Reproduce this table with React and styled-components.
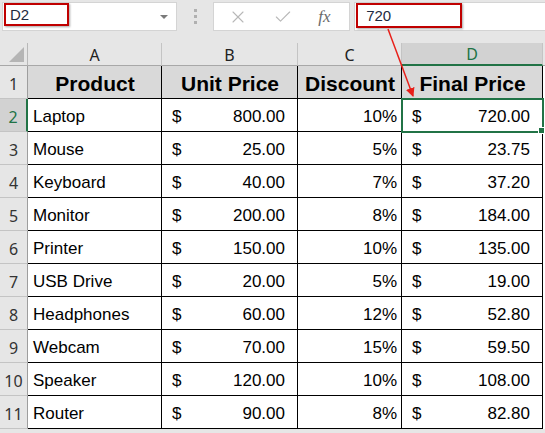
import React from "react";
import styled, { createGlobalStyle } from "styled-components";
import { X, Check } from "lucide-react";

const GlobalStyle = createGlobalStyle`
  body {
    margin: 0;
    background: #e6e6e6;
    font-family: "Liberation Sans", Arial, sans-serif;
  }
`;

const Page = styled.div`
  position: relative;
  width: 545px;
  height: 433px;
  overflow: hidden;
  background: #e6e6e6;
`;

const FormulaBar = styled.div`
  display: flex;
  align-items: stretch;
  height: 29px;
  padding: 2px 0 0 2px;
  margin-bottom: 12px;
`;

const NameBox = styled.div`
  display: flex;
  align-items: flex-start;
  justify-content: space-between;
  width: 175px;
  box-sizing: border-box;
  background: #fff;
  border: 1px solid #d4d4d4;
  padding: 0 8px 0 0;
`;

const Boxed = styled.div`
  display: flex;
  align-items: center;
  box-sizing: border-box;
  width: ${({ $w }) => $w}px;
  height: ${({ $h }) => $h}px;
  margin-left: 1px;
  padding-left: 4px;
  border: 2px solid #c00000;
  box-shadow: 1px 1px 2px rgba(0, 0, 0, 0.35);
  font-size: 15px;
  color: #1e2a40;
`;

const Caret = styled.span`
  align-self: center;
  width: 0;
  height: 0;
  border-left: 4px solid transparent;
  border-right: 4px solid transparent;
  border-top: 4px solid #7a7a7a;
`;

const Grip = styled.div`
  display: flex;
  flex-direction: column;
  justify-content: center;
  gap: 3px;
  width: 36px;
  align-items: center;
  span {
    width: 3px;
    height: 3px;
    background: #b0b0b0;
  }
`;

const ButtonBox = styled.div`
  display: flex;
  align-items: center;
  justify-content: space-around;
  width: 137px;
  box-sizing: border-box;
  background: #fff;
  border: 1px solid #d4d4d4;
  padding: 0 6px 0 2px;
`;

const Fx = styled.span`
  font-family: "Liberation Serif", "Times New Roman", serif;
  font-style: italic;
  font-size: 17px;
  color: #6a6a6a;
`;

const FormulaInput = styled.div`
  flex: 1;
  margin-left: 4px;
  background: #fff;
  border: 1px solid #d4d4d4;
  border-right: none;
`;

const Sheet = styled.div`
  display: grid;
  grid-template-columns: 28px 134px 136px 104px 141px 1fr;
  grid-template-rows: 23px repeat(11, 33px);
  background: #fff;
`;

const Corner = styled.div`
  position: relative;
  background: #e6e6e6;
  border-right: 1px solid #b8b8b8;
  border-bottom: 1px solid #a8a8a8;
  &::after {
    content: "";
    position: absolute;
    right: 3px;
    bottom: 3px;
    border-left: 15px solid transparent;
    border-bottom: 15px solid #b5b5b5;
  }
`;

const ColHead = styled.div`
  display: flex;
  align-items: center;
  justify-content: center;
  box-sizing: border-box;
  background: ${({ $active }) => ($active ? "#d2d2d2" : "#e6e6e6")};
  color: ${({ $active }) => ($active ? "#217346" : "#222")};
  border-right: 1px solid #c4c4c4;
  border-bottom: ${({ $active }) =>
    $active ? "2px solid #217346" : "1px solid #a8a8a8"};
  font-family: "Noto Sans", "Liberation Sans", sans-serif;
  font-size: 16px;
  padding-top: 1px;
`;

const RowHead = styled.div`
  display: flex;
  align-items: flex-end;
  justify-content: center;
  box-sizing: border-box;
  padding-bottom: 3px;
  background: ${({ $active }) => ($active ? "#d2d2d2" : "#e6e6e6")};
  color: ${({ $active }) => ($active ? "#217346" : "#333")};
  border-right: ${({ $active }) =>
    $active ? "2px solid #217346" : "1px solid #9e9e9e"};
  border-bottom: 1px solid #c4c4c4;
  font-family: "Noto Sans", "Liberation Sans", sans-serif;
  font-size: 16px;
`;

const Cell = styled.div`
  position: relative;
  display: flex;
  align-items: center;
  justify-content: ${({ $align }) =>
    $align === "right"
      ? "flex-end"
      : $align === "center"
      ? "center"
      : $align === "split"
      ? "space-between"
      : "flex-start"};
  box-sizing: border-box;
  padding: ${({ $align }) =>
    $align === "split" ? "4px 12px 0 10px" : "4px 4px 0 5px"};
  background: ${({ $head }) => ($head ? "#d9d9d9" : "#fff")};
  border-right: 1px solid #000;
  border-bottom: 1px solid #000;
  font-size: ${({ $head }) => ($head ? "21px" : "17px")};
  font-weight: ${({ $head }) => ($head ? 700 : 400)};
  color: #000;
  white-space: nowrap;
  ${({ $selected }) =>
    $selected &&
    `
    outline: 2px solid #217346;
    outline-offset: -1px;
    z-index: 1;
    &::after {
      content: "";
      position: absolute;
      right: -3px;
      bottom: -3px;
      width: 5px;
      height: 5px;
      background: #217346;
      border: 1px solid #fff;
    }
  `}
`;

const Filler = styled.div`
  background: ${({ $head }) => ($head ? "#e6e6e6" : "#fff")};
  border-bottom: ${({ $head }) => ($head ? "1px solid #a8a8a8" : "none")};
`;

const Arrow = styled.svg`
  position: absolute;
  left: 0;
  top: 0;
  pointer-events: none;
`;

const rows = [
  ["Laptop", "800.00", "10%", "720.00"],
  ["Mouse", "25.00", "5%", "23.75"],
  ["Keyboard", "40.00", "7%", "37.20"],
  ["Monitor", "200.00", "8%", "184.00"],
  ["Printer", "150.00", "10%", "135.00"],
  ["USB Drive", "20.00", "5%", "19.00"],
  ["Headphones", "60.00", "12%", "52.80"],
  ["Webcam", "70.00", "15%", "59.50"],
  ["Speaker", "120.00", "10%", "108.00"],
  ["Router", "90.00", "8%", "82.80"],
];

export default function App() {
  return (
    <Page>
      <GlobalStyle />
      <FormulaBar>
        <NameBox>
          <Boxed $w={65} $h={23}>D2</Boxed>
          <Caret />
        </NameBox>
        <Grip>
          <span />
          <span />
          <span />
        </Grip>
        <ButtonBox>
          <X size={20} strokeWidth={1.3} color="#b8b8b8" />
          <Check size={20} strokeWidth={1.3} color="#b8b8b8" />
          <Fx>fx</Fx>
        </ButtonBox>
        <FormulaInput>
          <Boxed $w={106} $h={25}>
            &nbsp;720
          </Boxed>
        </FormulaInput>
      </FormulaBar>

      <Sheet>
        <Corner />
        <ColHead>A</ColHead>
        <ColHead>B</ColHead>
        <ColHead>C</ColHead>
        <ColHead $active>D</ColHead>
        <Filler $head />

        <RowHead>1</RowHead>
        <Cell $head $align="center">Product</Cell>
        <Cell $head $align="center">Unit Price</Cell>
        <Cell $head $align="center">Discount</Cell>
        <Cell $head $align="center">Final Price</Cell>
        <Filler />

        {rows.map(([name, price, disc, final], i) => (
          <React.Fragment key={name}>
            <RowHead $active={i === 0}>{i + 2}</RowHead>
            <Cell>{name}</Cell>
            <Cell $align="split">
              <span>$</span>
              <span>{price}</span>
            </Cell>
            <Cell $align="right">{disc}</Cell>
            <Cell $align="split" $selected={i === 0}>
              <span>$</span>
              <span>{final}</span>
            </Cell>
            <Filler />
          </React.Fragment>
        ))}
      </Sheet>

      <Arrow width="545" height="433">
        <defs>
          <marker
            id="head"
            markerWidth="9"
            markerHeight="9"
            refX="8"
            refY="4.5"
            orient="auto"
            markerUnits="userSpaceOnUse"
          >
            <path d="M0,0 L9,4.5 L0,9 z" fill="#e8201a" />
          </marker>
        </defs>
        <line
          x1="388"
          y1="29"
          x2="413"
          y2="96"
          stroke="#e8201a"
          strokeWidth="1.5"
          markerEnd="url(#head)"
        />
      </Arrow>
    </Page>
  );
}
